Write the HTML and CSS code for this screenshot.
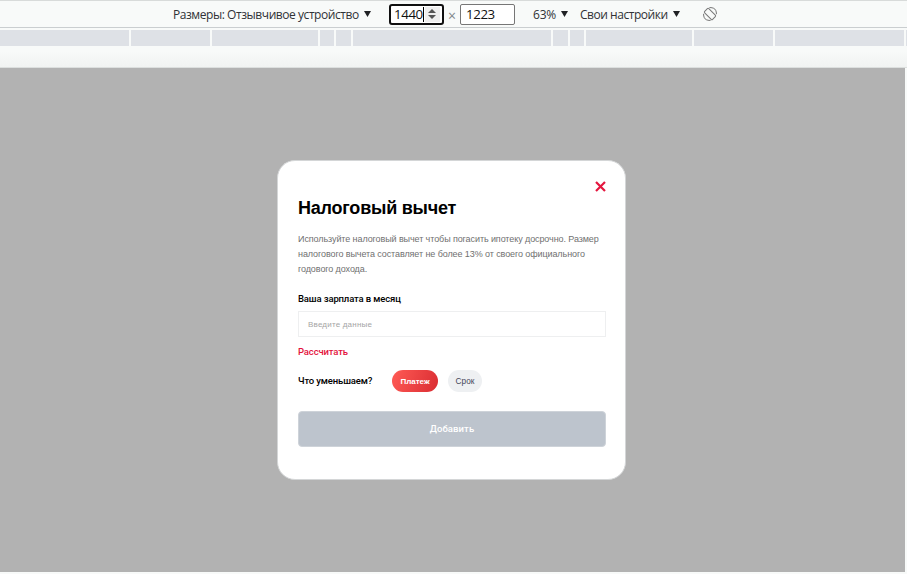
FILE: index.html
```html
<!DOCTYPE html>
<html lang="ru">
<head>
<meta charset="utf-8">
<title>Налоговый вычет</title>
<link rel="stylesheet" href="styles.css">
</head>
<body>
<header class="toolbar">
  <span class="device">Размеры: Отзывчивое устройство</span><i class="arrow"></i>
  <div class="size size-active"><span>1440</span><i class="caret"></i><b class="spin"><svg width="8" height="10" viewBox="0 0 8 10"><path d="M0 4 4 0l4 4zM0 6h8L4 10z" fill="#555"/></svg></b></div>
  <span class="times">×</span>
  <div class="size size-plain"><span>1223</span></div>
  <span class="zoom">63%</span><i class="arrow"></i>
  <span class="throttle">Свои настройки</span><i class="arrow"></i>
  <svg class="rotate" width="14" height="14" viewBox="0 0 14 14" fill="none" stroke="#777" stroke-width="1"><rect x="1.4" y="4.1" width="11.2" height="5.8" rx="1" transform="rotate(45 7 7)"/><path d="M6.4.6H8A5.8 5.8 0 0 1 13.4 6v1.2M7.6 13.4H6A5.8 5.8 0 0 1 .6 8V6.8"/></svg>
</header>
<div class="ruler"><i></i><i></i><i></i><i></i><i></i><i></i><i></i><i></i><i></i><i></i><i></i><i></i></div>
<div class="gutter"></div>
<main class="viewport">
  <section class="modal">
    <svg class="close" width="11" height="11" viewBox="0 0 11 11"><path d="M1 1l9 9M10 1l-9 9" stroke="#e4173f" stroke-width="2.2"/></svg>
    <h1><span>Налоговый вычет</span></h1>
    <p class="info">Используйте налоговый вычет чтобы погасить ипотеку досрочно. Размер<br>налогового вычета составляет не более 13% от своего официального<br>годового дохода.</p>
    <div class="label">Ваша зарплата в месяц</div>
    <div class="field"><span>Введите данные</span></div>
    <div class="calc"><span>Рассчитать</span></div>
    <div class="choices"><span class="question">Что уменьшаем?</span><div class="pill pill-on"><span>Платеж</span></div><div class="pill pill-off"><span>Срок</span></div></div>
    <div class="submit"><span>Добавить</span></div>
  </section>
</main>
</body>
</html>
```
FILE: styles.css
```css
* { box-sizing: border-box; }
body { margin: 0; width: 907px; height: 574px; overflow: hidden; background: #f8faf9; font-family: "Liberation Sans", sans-serif; }
.toolbar { height: 28px; border-top: 1px solid #d8dbda; border-bottom: 1px solid #caced0; background: #f8faf9; display: flex; align-items: center; padding-left: 173px; font: 12px/20px "Open Sans", sans-serif; color: #303236; white-space: nowrap; }
.device, .zoom, .throttle { padding-top: 2px; }
.device { width: 186px; margin-right: 5px; letter-spacing: -0.44px; }
.arrow { width: 7px; height: 6px; background: #202124; clip-path: polygon(0 0, 100% 0, 50% 100%); }
.size { height: 21px; background: #fff; display: flex; align-items: center; font-size: 13.3px; letter-spacing: -0.4px; color: #111; }
.size-active { width: 55px; margin-left: 18px; border: 2px solid #101010; border-radius: 3px; padding-left: 3px; }
.caret { width: 1px; height: 15px; background: #000; }
.spin { width: 15px; height: 15px; margin-left: 1px; background: #efefef; display: flex; align-items: center; justify-content: center; }
.times { width: 8px; margin: 4px 4px 0; font-size: 14px; color: #80868b; }
.size-plain { width: 55px; border: 1px solid #767676; border-radius: 2px; padding-left: 5px; }
.zoom { width: 23px; margin: 0 5px 0 18px; letter-spacing: -0.2px; }
.throttle { width: 88px; margin: 0 5px 0 12px; letter-spacing: -0.46px; }
.rotate { margin-left: 23px; }
.ruler { height: 16px; margin-top: 2px; display: grid; grid-template-columns: 129px 79px 106px 14px 15px 198px 15px 14px 106px 79px 129px 1px; column-gap: 2px; }
.ruler i { background: #dee1e6; }
.gutter { height: 22px; border-bottom: 1px solid #dcdfde; background: linear-gradient(#f8faf9 25%, #f1f3f2); }
.viewport { width: 905px; height: 504px; padding: 92px 0 0 277px; background: #b2b2b2; }
.modal { position: relative; width: 349px; height: 320px; padding: 36px 21px 0 20px; background: #fff; border: 1px solid #d4d6d7; border-radius: 18px; white-space: nowrap; }
.close { position: absolute; left: 317px; top: 20px; }
h1 { margin: 0; font-size: 18px; line-height: 22px; letter-spacing: -0.22px; color: #000; }
.info { margin: 13px 0 0; font-size: 9px; line-height: 15px; letter-spacing: -0.09px; color: #707070; }
.label { margin-top: 14px; font: 500 9.5px/15px Roboto, sans-serif; letter-spacing: -0.14px; color: #000; }
.field { height: 26px; width: 308px; margin-top: 5px; padding-left: 9px; border: 1px solid #eeeff0; display: flex; align-items: center; font-size: 8px; letter-spacing: 0.2px; color: #a5a5a5; }
.calc { margin-top: 7px; font: 500 9.5px/15px Roboto, sans-serif; letter-spacing: -0.14px; color: #e3123c; }
.choices { margin-top: 11px; height: 22px; display: flex; align-items: center; }
.question { width: 94px; padding-bottom: 1px; font: 500 9.5px/15px Roboto, sans-serif; letter-spacing: -0.14px; color: #000; }
.pill { height: 22px; border-radius: 11px; display: flex; align-items: center; justify-content: center; font-size: 8px; }
.pill-on { width: 46px; margin-right: 10px; background: linear-gradient(110deg, #ff5b55, #da2c32); color: #fff; font-weight: 700; }
.pill-off { width: 34px; background: #eef0f2; color: #45465a; font-size: 8.3px; }
.submit { width: 308px; height: 36px; margin-top: 19px; padding-bottom: 1px; border: 1px solid #ced3d9; border-radius: 4px; background: #bdc4cd; color: #fff; display: flex; align-items: center; justify-content: center; font: 500 9.5px/15px Roboto, sans-serif; letter-spacing: 0.1px; }
```
